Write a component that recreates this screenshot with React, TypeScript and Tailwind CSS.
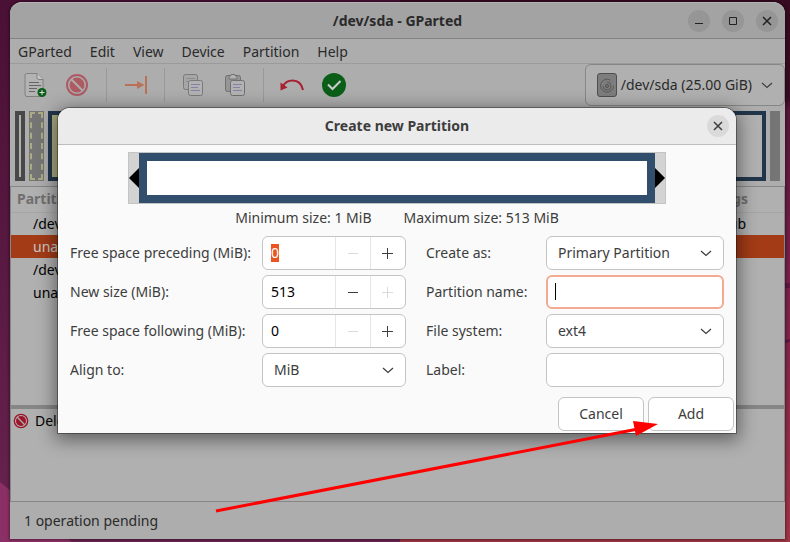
import type { ReactNode } from 'react';

const menuItems = ['GParted', 'Edit', 'View', 'Device', 'Partition', 'Help'];

const partitions = [
    { name: '/dev/sda1', flags: 'bios_grub', selected: false },
    { name: 'unallocated', flags: '', selected: true },
    { name: '/dev/sda2', flags: '', selected: false },
    { name: 'unallocated', flags: '', selected: false },
];

function Wallpaper() {
    return (
        <svg viewBox="0 0 790 542" preserveAspectRatio="none" className="absolute inset-0 h-full w-full">
            <defs>
                <linearGradient id="wall-left" x1="0" y1="0" x2="0" y2="1">
                    <stop offset="0" stopColor="#4a1035" />
                    <stop offset="1" stopColor="#692350" />
                </linearGradient>
                <linearGradient id="wall-right" x1="0" y1="0" x2="0" y2="1">
                    <stop offset="0" stopColor="#380a22" />
                    <stop offset=".18" stopColor="#360a22" />
                    <stop offset=".2" stopColor="#551438" />
                    <stop offset=".5" stopColor="#74204a" />
                    <stop offset="1" stopColor="#9e3544" />
                </linearGradient>
            </defs>
            <path d="M0 0h400v542H0z" fill="url(#wall-left)" />
            <path d="M400 0h390v542H400z" fill="url(#wall-right)" />
            <path d="M0 482l72 60H0z" fill="#8b3066" />
            <path d="M780 283h10v5h-10zM780 341l10-2v3l-10 2z" fill="#5c1840" />
        </svg>
    );
}

function CloseIcon() {
    return (
        <svg viewBox="0 0 16 16" className="size-4" fill="none" stroke="currentColor" strokeWidth="1.5">
            <path d="M4 4l8 8M12 4l-8 8" />
        </svg>
    );
}

function Chevron() {
    return (
        <svg viewBox="0 0 12 12" className="size-3" fill="none" stroke="#3d3d3d" strokeWidth="1.2">
            <path d="M1 4l5 4.5 5-4.5" />
        </svg>
    );
}

function DeleteIcon({ className }: { className: string }) {
    return (
        <svg viewBox="0 0 24 24" className={className}>
            <circle cx="12" cy="12" r="10" fill="none" stroke="currentColor" strokeWidth="2" />
            <circle cx="12" cy="12" r="7.500" fill="currentColor" />
            <path d="M6.500 6.500l11 11" stroke="#adadad" strokeWidth="2" />
        </svg>
    );
}

function NewIcon() {
    return (
        <svg viewBox="0 0 24 26" className="h-[26px] w-6" fill="none">
            <path d="M3.500 1.500h10.500l6 6v15q0 2-2 2h-14q-2 0-2-2v-19q0-2 1.500-2z" fill="#b3b3b3" stroke="#808080" />
            <path d="M14 1.500v4q0 2 2 2h4" fill="#c6c6c6" stroke="#808080" />
            <path d="M6 10.500h10M6 13.500h12M6 16.500h8M6 19.500h6" stroke="#666" />
            <circle cx="19" cy="20.500" r="4.500" fill="#0b5e17" />
            <path d="M19 18v5M16.500 20.500h5" stroke="#ddd" />
        </svg>
    );
}

function ResizeIcon() {
    return (
        <svg viewBox="0 0 24 20" className="h-5 w-6">
            <path d="M1 10h13M22 1v18" stroke="#b9715a" strokeWidth="2" />
            <path d="M13 6l7.500 4-7.500 4z" fill="#b9715a" />
        </svg>
    );
}

function CopyIcon() {
    return (
        <svg viewBox="0 0 22 24" className="h-6 w-[22px]" fill="none" stroke="#7a7a7a">
            <rect x="1.500" y="1.500" width="14" height="15" rx="2" fill="#a6a6a6" />
            <path d="M4 5.500h9M4 8.500h3" stroke="#8c8c8c" />
            <rect x="6.500" y="7.500" width="14" height="15" rx="2" fill="#b2b2b2" />
            <path d="M9 11.500h9M9 14.500h7M9 17.500h9" stroke="#8482a8" />
        </svg>
    );
}

function PasteIcon() {
    return (
        <svg viewBox="0 0 22 24" className="h-6 w-[22px]" fill="none" stroke="#707070">
            <rect x="1.500" y="2.500" width="15" height="16" rx="2" fill="#969696" />
            <path d="M5 4.500q0-1.500 1.500-1.500 0-1.500 1.500-1.500h2q1.500 0 1.500 1.500 1.500 0 1.500 1.500v1.500h-8z" fill="#b4b4b4" />
            <rect x="6.500" y="7.500" width="14" height="15" rx="2" fill="#b2b2b2" />
            <path d="M9 11.500h9M9 14.500h7M9 17.500h9" stroke="#8482a8" />
        </svg>
    );
}

function UndoIcon() {
    return (
        <svg viewBox="0 0 24 14" className="h-3.5 w-6" fill="none">
            <path d="M3 8q3-5.500 9.500-5.500 8.500 0 10.500 9.500" stroke="#a81f31" strokeWidth="2" />
            <path d="M.5 4.500v8l7-3z" fill="#a81f31" />
        </svg>
    );
}

function ApplyIcon() {
    return (
        <svg viewBox="0 0 24 24" className="size-6" fill="none">
            <circle cx="12" cy="12" r="12" fill="#0b5e17" />
            <path d="M6 11.500l4.500 4.500 8-8" stroke="#ccc" strokeWidth="2" />
        </svg>
    );
}

function DiskIcon() {
    return (
        <svg viewBox="0 0 20 24" className="h-6 w-5" fill="none">
            <rect x=".5" y=".5" width="19" height="23" rx="2.500" fill="#7d7d7d" stroke="#4f4f4f" />
            <path d="M13.500 7.200a6.500 6.500 0 1 0 3 5.300M6 13a4 4 0 1 0 4-4" stroke="#5a5a5a" />
            <circle cx="10" cy="13" r="1.500" stroke="#4f4f4f" />
        </svg>
    );
}

function ToolButton({ label, children }: { label: string; children: ReactNode }) {
    return (
        <button type="button" aria-label={label} className="flex h-8 w-[42px] items-center justify-center">
            {children}
        </button>
    );
}

function WindowButton({ label, children }: { label: string; children: ReactNode }) {
    return (
        <button type="button" aria-label={label} className="flex size-[22px] items-center justify-center rounded-full bg-[#969696] text-[#222]">
            {children}
        </button>
    );
}

type SpinProps = { id: string; label: string; value: string; minus?: boolean; plus?: boolean; selected?: boolean };

function SpinField({ id, label, value, minus = false, plus = false, selected = false }: SpinProps) {
    return (
        <>
            <label htmlFor={id}>{label}</label>
            <div className="flex h-[34px] overflow-hidden rounded-md border border-[#c4c4c4] bg-white text-black">
                <div className="flex min-w-0 flex-1 items-center pl-2">
                    <input
                        id={id}
                        defaultValue={value}
                        className={selected ? 'field-sizing-content h-[18px] bg-[#e95420] text-white outline-none' : 'h-[18px] w-full outline-none'}
                    />
                </div>
                <button
                    type="button"
                    aria-label="Decrease"
                    disabled={!minus}
                    className="flex w-[35px] items-center justify-center border-l border-[#e6e6e6] text-[#3d3d3d] disabled:text-[#dadada]"
                >
                    <svg viewBox="0 0 12 12" className="size-3" stroke="currentColor">
                        <path d="M1 6.500h10" />
                    </svg>
                </button>
                <button
                    type="button"
                    aria-label="Increase"
                    disabled={!plus}
                    className="flex w-[35px] items-center justify-center border-l border-[#e6e6e6] text-[#3d3d3d] disabled:text-[#dadada]"
                >
                    <svg viewBox="0 0 12 12" className="size-3" stroke="currentColor">
                        <path d="M0 6.500h11M5.500 1v11" />
                    </svg>
                </button>
            </div>
        </>
    );
}

function SelectField({ id, label, value, second = false }: { id: string; label: string; value: string; second?: boolean }) {
    return (
        <>
            <label htmlFor={id} className={second ? 'pl-5' : ''}>{label}</label>
            <div className="relative">
                <select id={id} className="block h-[34px] w-full appearance-none rounded-md border border-[#c4c4c4] bg-white pl-[11px] text-[#3d3d3d]">
                    <option>{value}</option>
                </select>
                <span className="pointer-events-none absolute inset-y-0 right-3 flex items-center">
                    <Chevron />
                </span>
            </div>
        </>
    );
}

function CreateDialog() {
    return (
        <section
            role="dialog"
            aria-labelledby="dialog-title"
            className="relative w-full rounded-t-xl bg-[#fafafa] shadow-[0_0_0_1px_rgba(0,0,0,0.35),0_4px_18px_3px_rgba(0,0,0,0.45)]"
        >
            <header className="flex h-[37px] items-center rounded-t-xl border-b border-[#bdbdbd] bg-[#ebebeb] pr-[7px] pl-[29px]">
                <h2 id="dialog-title" className="flex-1 text-center font-bold">Create new Partition</h2>
                <button type="button" aria-label="Close" className="flex size-[22px] items-center justify-center rounded-full bg-[#dadada]">
                    <CloseIcon />
                </button>
            </header>

            {/* Resize bar */}
            <div className="mx-[70px] mt-[7px] flex h-[52px] items-center border border-[#c4c4c4] bg-[#d3d3d3]">
                <svg viewBox="0 0 10 20" className="h-5 w-2.5">
                    <path d="M10 0v20L0 10z" />
                </svg>
                <div className="h-full flex-1 border-8 border-[#314e6c] bg-white" />
                <svg viewBox="0 0 10 20" className="h-5 w-2.5">
                    <path d="M0 0v20l10-10z" />
                </svg>
            </div>
            <div className="mb-1 flex h-7 items-center justify-center gap-8">
                <span>Minimum size: 1 MiB</span>
                <span>Maximum size: 513 MiB</span>
            </div>

            <form className="grid grid-cols-[192px_144px_140px_1fr] items-center gap-y-[5px] px-3">
                <SpinField id="preceding" label="Free space preceding (MiB):" value="0" plus selected />
                <SelectField id="create-as" label="Create as:" value="Primary Partition" second />
                <SpinField id="size" label="New size (MiB):" value="513" minus />
                <label htmlFor="part-name" className="pl-5">Partition name:</label>
                <div className="relative">
                    <input id="part-name" className="block h-[34px] w-full rounded-md border-2 border-[#f4aa90] bg-white px-2 outline-none" />
                    {/* Text cursor */}
                    <span className="absolute top-2 left-[9px] h-[17px] w-px bg-black" />
                </div>
                <SpinField id="following" label="Free space following (MiB):" value="0" plus />
                <SelectField id="fs" label="File system:" value="ext4" second />
                <SelectField id="align" label="Align to:" value="MiB" />
                <label htmlFor="fs-label" className="pl-5">Label:</label>
                <input id="fs-label" className="h-[34px] w-full rounded-md border border-[#c4c4c4] bg-white px-2" />
            </form>

            <footer className="mt-2.5 flex justify-end gap-1 pr-0.5 pb-0.5">
                <button type="button" className="h-[34px] w-[86px] rounded-md border border-[#c4c4c4] bg-white">Cancel</button>
                <button type="button" className="h-[34px] w-[86px] rounded-md border border-[#c4c4c4] bg-white">Add</button>
            </footer>

            {/* Arrow pointing at the Add button */}
            <svg viewBox="0 0 446 96" className="pointer-events-none absolute right-[76px] -bottom-[81px] h-24 w-[446px]">
                <path d="M2 93L424 11" stroke="#f00" strokeWidth="3" />
                <path d="M444 6L419 3l3 15z" fill="#f00" />
            </svg>
        </section>
    );
}

export default function App() {
    return (
        <div className="relative h-screen pt-0.5 pr-[5px] pb-[3px] pl-2.5 font-['Noto_Sans',sans-serif] text-sm text-[#3d3d3d]">
            <Wallpaper />
            <main className="relative flex h-full flex-col rounded-t-xl bg-[#adadad] text-[#2a2a2a] shadow-[0_0_3px_1px_rgba(0,0,0,0.4)]">
                <header className="flex h-[37px] shrink-0 items-center rounded-t-xl border-t border-b border-t-[#b4b4b4] border-b-[#828282] bg-[#a3a3a3] pr-[7px] pl-[97px]">
                    <h1 className="flex-1 text-center font-bold">/dev/sda - GParted</h1>
                    <div className="flex gap-3">
                        <WindowButton label="Minimize">
                            <svg viewBox="0 0 8 8" className="size-2" stroke="currentColor"><path d="M0 6.500h8" /></svg>
                        </WindowButton>
                        <WindowButton label="Maximize">
                            <svg viewBox="0 0 8 8" className="size-2" fill="none" stroke="currentColor"><path d="M.5.5h7v7h-7z" /></svg>
                        </WindowButton>
                        <WindowButton label="Close"><CloseIcon /></WindowButton>
                    </div>
                </header>

                <nav className="flex h-[25px] shrink-0 items-center gap-[18px] border-b border-[#9b9b9b] px-2 pt-0.5">
                    {menuItems.map((item) => (
                        <button key={item} type="button">{item}</button>
                    ))}
                </nav>

                <div className="flex h-[42px] shrink-0 items-center pl-1">
                    <ToolButton label="New"><NewIcon /></ToolButton>
                    <ToolButton label="Delete"><DeleteIcon className="size-6 text-[#ad5a63]" /></ToolButton>
                    <span className="mx-2 h-[34px] w-px bg-[#999]" />
                    <ToolButton label="Resize/Move"><ResizeIcon /></ToolButton>
                    <span className="mx-[7px] h-[34px] w-px bg-[#999]" />
                    <ToolButton label="Copy"><CopyIcon /></ToolButton>
                    <ToolButton label="Paste"><PasteIcon /></ToolButton>
                    <span className="mx-[7px] h-[34px] w-px bg-[#999]" />
                    <ToolButton label="Undo"><UndoIcon /></ToolButton>
                    <ToolButton label="Apply"><ApplyIcon /></ToolButton>
                    <button type="button" className="ml-auto flex h-[42px] items-center gap-1 rounded-md border border-[#868686] bg-[#b0b0b0] px-[11px]">
                        <DiskIcon />
                        <span className="mr-[5px]">/dev/sda (25.00 GiB)</span>
                        <Chevron />
                    </button>
                </div>

                {/* Disk map */}
                <div className="mt-[5px] flex h-[70px] shrink-0 gap-1 px-[5px]">
                    <div className="w-2.5 border-4 border-[#484848] bg-[#b0b0b0]" />
                    <div className="w-[15px] bg-[#757575] p-px">
                        <div className="h-full border-2 border-dashed border-[#acac80]" />
                    </div>
                    <div className="flex flex-1 border-4 border-[#22364b] bg-[#b0b0b0]">
                        <div className="w-1/3 bg-[#acac80]" />
                    </div>
                    <div className="w-2.5 bg-[#757575]" />
                </div>

                <div className="mt-[5px] flex-1 border border-[#868686] bg-[#b0b0b0]">
                    <table className="w-full border-collapse">
                        <thead>
                            <tr className="h-[25px] border-b border-[#a6a6a6] text-[#6f6f6f]">
                                <th className="pl-1.5 text-left font-bold">Partition</th>
                                <th className="pr-9 text-right font-bold">Flags</th>
                            </tr>
                        </thead>
                        <tbody>
                            {partitions.map((row, i) => (
                                <tr key={i} className={row.selected ? 'h-[23px] bg-[#a33b17] text-[#c8c8c8]' : 'h-[23px] text-black'}>
                                    <td className="pl-[22px]">{row.name}</td>
                                    <td className="pr-[38px] text-right">{row.flags}</td>
                                </tr>
                            ))}
                        </tbody>
                    </table>
                </div>

                {/* Pending operations */}
                <div className="flex h-24 shrink-0 items-start gap-1.5 border border-t-3 border-[#868686] bg-[#b0b0b0] px-0.5 pt-[2px] text-black">
                    <DeleteIcon className="mt-0.5 size-4 text-[#9c1528]" />
                    <span>Delete /dev/sda3</span>
                </div>
                <footer className="flex h-[37px] shrink-0 items-center px-3.5">1 operation pending</footer>

                <div className="absolute inset-0 flex items-center pr-[49px] pl-12 text-[#3d3d3d]">
                    <CreateDialog />
                </div>
            </main>
        </div>
    );
}
